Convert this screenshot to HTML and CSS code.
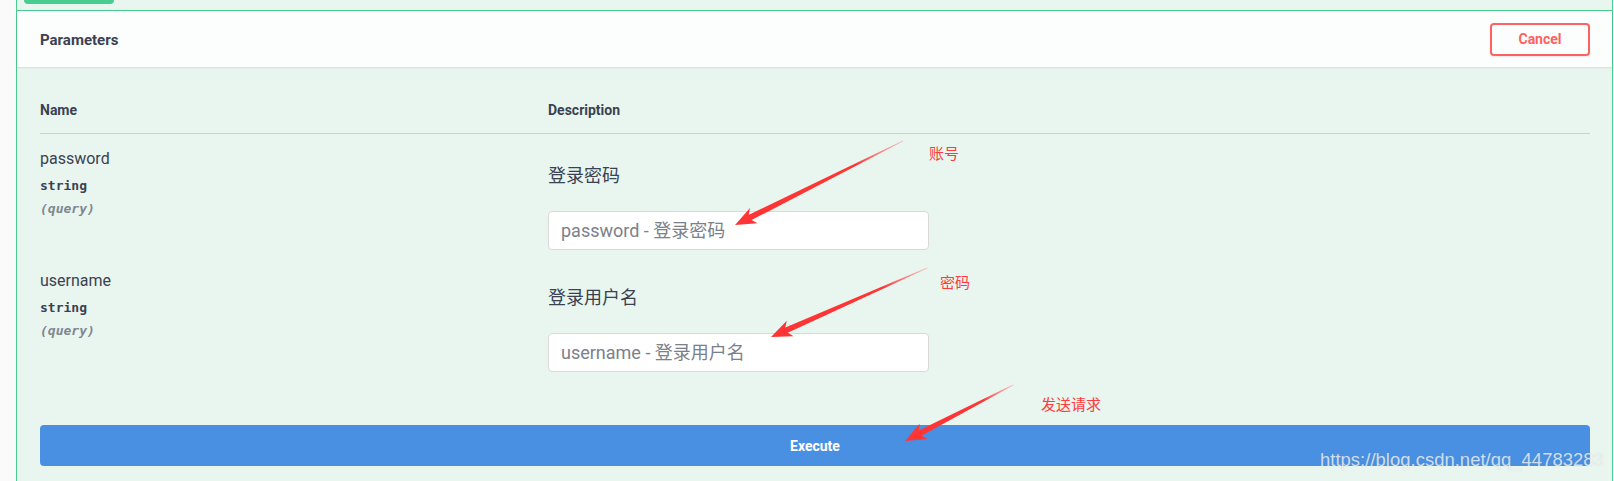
FILE: index.html
```html
<!DOCTYPE html>
<html lang="zh">
<head>
<meta charset="utf-8">
<title>Parameters</title>
<link rel="stylesheet" href="styles.css">
</head>
<body>
<div class="opblock">
  <div class="summary"><span class="method-tab"></span></div>
  <div class="section-header">
    <h4 class="title">Parameters</h4>
    <button class="btn-cancel">Cancel</button>
  </div>
  <div class="params">
    <div class="param-row head">
      <div>Name</div>
      <div>Description</div>
    </div>
    <div class="param-row">
      <div class="col-name">
        <div class="pname">password</div>
        <div class="ptype">string</div>
        <div class="pin">(query)</div>
      </div>
      <div class="col-desc">
        <div class="desc">登录密码</div>
        <input class="field" type="text" placeholder="password - 登录密码">
      </div>
    </div>
    <div class="param-row">
      <div class="col-name">
        <div class="pname">username</div>
        <div class="ptype">string</div>
        <div class="pin">(query)</div>
      </div>
      <div class="col-desc">
        <div class="desc">登录用户名</div>
        <input class="field" type="text" placeholder="username - 登录用户名">
      </div>
    </div>
    <button class="btn-execute">Execute</button>
  </div>
</div>

<div class="note note-1">账号</div>
<div class="note note-2">密码</div>
<div class="note note-3">发送请求</div>

<svg class="arrows" width="1614" height="481" viewBox="0 0 1614 481">
  <defs>
    <linearGradient id="fade" x1="0" y1="0" x2="1" y2="0">
      <stop offset="0" stop-color="#ff3535"/>
      <stop offset="0.72" stop-color="#ff3535"/>
      <stop offset="1" stop-color="#ff9a9a" stop-opacity="0.6"/>
    </linearGradient>
  </defs>
  <g transform="translate(735,225) rotate(-26.57)">
    <polygon fill="url(#fade)" points="0,0 21,-8.5 17,-3 188,-0.4 188,0.4 17,3 21,8.5"/>
  </g>
  <g transform="translate(771,337) rotate(-23.86)">
    <polygon fill="url(#fade)" points="0,0 21,-8.5 17,-3 171,-0.4 171,0.4 17,3 21,8.5"/>
  </g>
  <g transform="translate(905,441) rotate(-27.41)">
    <polygon fill="url(#fade)" points="0,0 21,-8.5 17,-3 122,-0.4 122,0.4 17,3 21,8.5"/>
  </g>
</svg>

<div class="watermark">https://blog.csdn.net/qq_44783283</div>
</body>
</html>
```

FILE: styles.css
```css
html, body {
  margin: 0;
  padding: 0;
}
body {
  position: relative;
  width: 1614px;
  height: 481px;
  overflow: hidden;
  background: #fafafa;
  font-family: Roboto, "Noto Sans CJK SC", sans-serif;
  color: #3b4151;
}
.opblock {
  box-sizing: border-box;
  margin-left: 16px;
  width: 1597px;
  height: 481px;
  border-left: 1px solid #49cc90;
  border-right: 1px solid #49cc90;
  background: #e8f6ef;
}
.summary {
  height: 10px;
  border-bottom: 1px solid #49cc90;
}
.method-tab {
  display: block;
  margin-left: 7px;
  width: 90px;
  height: 4px;
  background: #49cc90;
  border-radius: 0 0 4px 4px;
}
.section-header {
  box-sizing: border-box;
  height: 56px;
  padding: 0 22px 0 23px;
  display: flex;
  align-items: center;
  justify-content: space-between;
  background: #fcfefd;
  box-shadow: 0 1px 2px rgba(0, 0, 0, 0.1);
  position: relative;
}
.title {
  margin: 0;
  font-size: 15px;
  font-weight: 700;
  color: #3b4151;
  line-height: 20px;
  padding-top: 2px;
}
.btn-cancel {
  box-sizing: border-box;
  width: 100px;
  height: 33px;
  border: 2px solid #ff6060;
  border-radius: 4px;
  background: transparent;
  color: #ff6060;
  font-family: Roboto, sans-serif;
  font-size: 14px;
  font-weight: 700;
  box-shadow: 0 1px 2px rgba(0, 0, 0, 0.1);
  padding: 0;
}
.params {
  padding: 30px 22px 0 23px;
}
.param-row {
  display: grid;
  grid-template-columns: 508px 1fr;
  padding: 15px 0 6px;
}
.param-row.head {
  padding: 0 0 10px;
  line-height: 26px;
  font-size: 14px;
  font-weight: 700;
  border-bottom: 1px solid #c5d3cc;
}
.pname {
  font-size: 16px;
  line-height: 20px;
  color: #3b4151;
}
.ptype {
  margin-top: 8px;
  font-family: "DejaVu Sans Mono", monospace;
  font-size: 13px;
  line-height: 18px;
  font-weight: 600;
  color: #3b4151;
}
.pin {
  margin-top: 5px;
  font-family: "DejaVu Sans Mono", monospace;
  font-size: 13px;
  line-height: 18px;
  font-style: italic;
  font-weight: 600;
  color: #808691;
}
.desc {
  margin-top: 15px;
  font-size: 18px;
  line-height: 24px;
  color: #3b4151;
}
.field {
  display: block;
  box-sizing: border-box;
  margin-top: 23px;
  width: 381px;
  height: 39px;
  padding: 0 12px;
  border: 1px solid #d9d9d9;
  border-radius: 4px;
  background: #fff;
  font-family: Roboto, "Noto Sans CJK SC", sans-serif;
  font-size: 18px;
  color: #3b4151;
  outline: none;
}
.field::placeholder {
  color: #7b818b;
}
.btn-execute {
  display: block;
  box-sizing: border-box;
  margin-top: 47px;
  width: 100%;
  height: 41px;
  border: none;
  border-radius: 4px;
  background: #4990e2;
  color: #fff;
  font-family: Roboto, sans-serif;
  font-size: 14px;
  font-weight: 700;
  padding: 0;
}
.note {
  position: absolute;
  font-family: "Noto Sans CJK SC", sans-serif;
  font-size: 15px;
  line-height: 20px;
  color: #ff3b3b;
}
.note-1 { left: 929px; top: 143px; }
.note-2 { left: 940px; top: 272px; }
.note-3 { left: 1041px; top: 394px; }
.arrows {
  position: absolute;
  left: 0;
  top: 0;
  pointer-events: none;
}
.watermark {
  position: absolute;
  left: 1320px;
  top: 449px;
  font-family: "Liberation Sans", Arial, sans-serif;
  font-size: 18.5px;
  line-height: 22px;
  color: rgba(255, 255, 255, 0.72);
  text-shadow: 0 0 1px rgba(120, 120, 120, 0.35);
  white-space: nowrap;
}
```
